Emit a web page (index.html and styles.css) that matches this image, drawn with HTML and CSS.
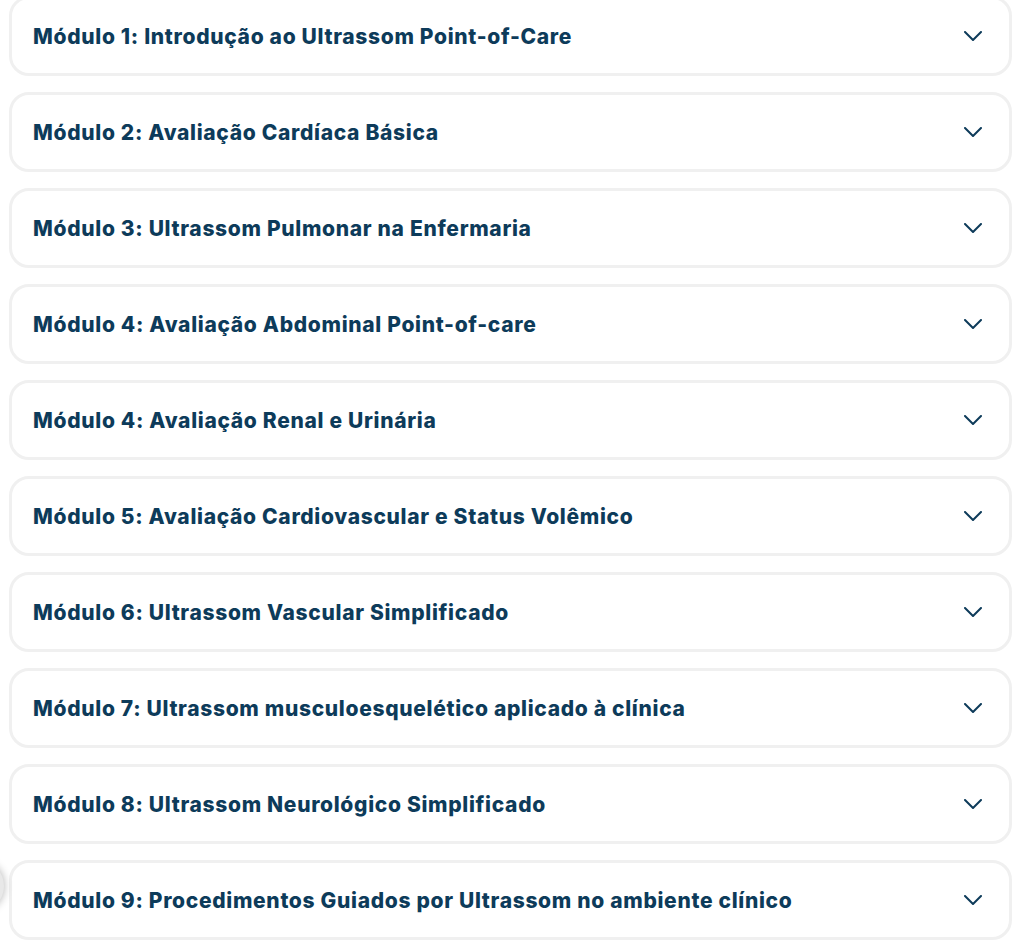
FILE: index.html
```html
<!DOCTYPE html>
<html lang="pt-BR">
	<head>
		<meta charset="utf-8">
		<meta name="viewport" content="width=device-width, initial-scale=1.0">
		<title>Módulos do curso</title>
		<link rel="stylesheet" href="styles.css">
	</head>
	<body>
		<div class="fab-shadow"></div>
		<div class="modules">
			<div class="module">
				<span class="module-title">Módulo 1: Introdução ao Ultrassom Point-of-Care</span>
				<svg class="chevron" viewBox="0 0 18 10"><path d="M1 1l8 8 8-8"/></svg>
			</div>
			<div class="module">
				<span class="module-title">Módulo 2: Avaliação Cardíaca Básica</span>
				<svg class="chevron" viewBox="0 0 18 10"><path d="M1 1l8 8 8-8"/></svg>
			</div>
			<div class="module">
				<span class="module-title">Módulo 3: Ultrassom Pulmonar na Enfermaria</span>
				<svg class="chevron" viewBox="0 0 18 10"><path d="M1 1l8 8 8-8"/></svg>
			</div>
			<div class="module">
				<span class="module-title">Módulo 4: Avaliação Abdominal Point-of-care</span>
				<svg class="chevron" viewBox="0 0 18 10"><path d="M1 1l8 8 8-8"/></svg>
			</div>
			<div class="module">
				<span class="module-title">Módulo 4: Avaliação Renal e Urinária</span>
				<svg class="chevron" viewBox="0 0 18 10"><path d="M1 1l8 8 8-8"/></svg>
			</div>
			<div class="module">
				<span class="module-title">Módulo 5: Avaliação Cardiovascular e Status Volêmico</span>
				<svg class="chevron" viewBox="0 0 18 10"><path d="M1 1l8 8 8-8"/></svg>
			</div>
			<div class="module">
				<span class="module-title">Módulo 6: Ultrassom Vascular Simplificado</span>
				<svg class="chevron" viewBox="0 0 18 10"><path d="M1 1l8 8 8-8"/></svg>
			</div>
			<div class="module">
				<span class="module-title">Módulo 7: Ultrassom musculoesquelético aplicado à clínica</span>
				<svg class="chevron" viewBox="0 0 18 10"><path d="M1 1l8 8 8-8"/></svg>
			</div>
			<div class="module">
				<span class="module-title">Módulo 8: Ultrassom Neurológico Simplificado</span>
				<svg class="chevron" viewBox="0 0 18 10"><path d="M1 1l8 8 8-8"/></svg>
			</div>
			<div class="module">
				<span class="module-title">Módulo 9: Procedimentos Guiados por Ultrassom no ambiente clínico</span>
				<svg class="chevron" viewBox="0 0 18 10"><path d="M1 1l8 8 8-8"/></svg>
			</div>
		</div>
	</body>
</html>
```

FILE: styles.css
```css
*{
	margin: 0;
	padding: 0;
	box-sizing: border-box;
}
html,
body{
	height: 100%;
	overflow: hidden;
}
body{
	background: #fff;
	font-family: "Inter", "Noto Sans", sans-serif;
	position: relative;
}
/* lista de módulos */
.modules{
	display: flex;
	flex-direction: column;
	gap: 16px;
	padding: 0 12px 0 9px;
	margin-top: -4px;
}
.module{
	display: flex;
	align-items: center;
	justify-content: space-between;
	height: 80px;
	padding: 0 27px 0 21px;
	border: 3px solid #f0f0f0;
	border-radius: 20px;
	background: #fff;
}
.module-title{
	font-size: 21px;
	font-weight: 800;
	color: #0d3b5a;
	letter-spacing: 0.68px;
}
.chevron{
	width: 18px;
	height: 10px;
	fill: none;
	stroke: #0d3b5a;
	stroke-width: 2;
	stroke-linecap: round;
	stroke-linejoin: round;
}
/* sombra do botão flutuante cortada na borda */
.fab-shadow{
	position: absolute;
	left: -40px;
	top: 862px;
	width: 44px;
	height: 48px;
	border-radius: 50%;
	box-shadow: 0 0 8px rgba(0,0,0,0.3);
	background: #e8e8e8;
}
```
